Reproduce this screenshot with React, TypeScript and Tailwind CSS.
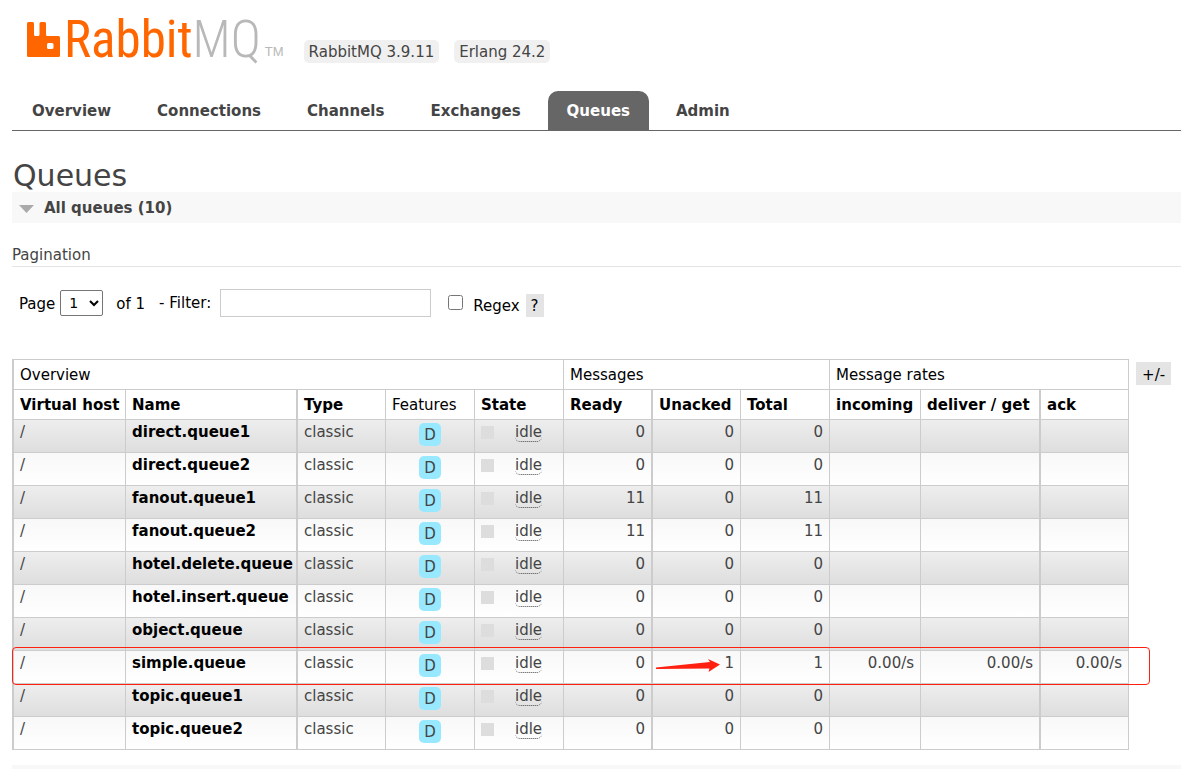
import React from "react";

const tabs = ["Overview", "Connections", "Channels", "Exchanges", "Queues", "Admin"];

type Queue = { name: string; ready: number; unacked: number; total: number; rate?: string };

const queues: Queue[] = [
  { name: "direct.queue1", ready: 0, unacked: 0, total: 0 },
  { name: "direct.queue2", ready: 0, unacked: 0, total: 0 },
  { name: "fanout.queue1", ready: 11, unacked: 0, total: 11 },
  { name: "fanout.queue2", ready: 11, unacked: 0, total: 11 },
  { name: "hotel.delete.queue", ready: 0, unacked: 0, total: 0 },
  { name: "hotel.insert.queue", ready: 0, unacked: 0, total: 0 },
  { name: "object.queue", ready: 0, unacked: 0, total: 0 },
  { name: "simple.queue", ready: 0, unacked: 1, total: 1, rate: "0.00/s" },
  { name: "topic.queue1", ready: 0, unacked: 0, total: 0 },
  { name: "topic.queue2", ready: 0, unacked: 0, total: 0 },
];

const thin = "border-r border-b border-[#ccc] px-[6px]";
const thick = "border-r-2 border-b border-[#ccc] px-[6px]";

function Logo() {
  return (
    <a href="#/" aria-label="RabbitMQ" className="flex items-end">
      <svg viewBox="0 0 33 35" className="mb-[5px] h-[35px] w-[33px]" fill="#f60" aria-hidden="true">
        <path
          fillRule="evenodd"
          d="M1.500 0H5.500Q7 0 7 1.500V12.500Q7 14 8.500 14H11Q12.500 14 12.500 12.500V1.500Q12.500 0 14 0H17.500Q19 0 19 1.500V12.500Q19 14 20.500 14H31.500Q33 14 33 15.500V33.500Q33 35 31.500 35H1.500Q0 35 0 33.500V1.500Q0 0 1.500 0ZM21.500 21Q20 21 20 22.500V25.500Q20 27 21.500 27H25Q26.500 27 26.500 25.500V22.500Q26.500 21 25 21Z"
        />
      </svg>
      <span className="ml-[4px] font-['Liberation_Sans_Narrow','Roboto_Condensed',Roboto,sans-serif] text-[51px] leading-[44px] font-normal text-[#f60]">
        Rabbit<span className="font-light text-[#b8b8b8]">MQ</span>
      </span>
      <span className="mb-[2px] ml-1 font-['Liberation_Sans',sans-serif] text-[13px] leading-4 text-[#b8b8b8]">TM</span>
    </a>
  );
}

export default function App() {
  return (
    <div className="bg-white pl-3 font-['DejaVu_Sans',Verdana,sans-serif] text-[15px] leading-[18px] text-[#444]">
      <header>
        <div className="flex h-[91px] items-start pt-[18px] pl-[15px]">
          <Logo />
          <ul className="mt-[22px] ml-5 flex gap-[15px]">
            <li className="rounded-[5px] bg-[#f0f0f0] px-[5px] pt-[3px] pb-px leading-[19px]">RabbitMQ 3.9.11</li>
            <li className="rounded-[5px] bg-[#f0f0f0] px-[5px] pt-[3px] pb-px leading-[19px]">Erlang 24.2</li>
          </ul>
        </div>
        <nav className="flex gap-2 border-b border-[#666] pl-px font-bold">
          {tabs.map((tab) => (
            <a
              key={tab}
              href={`#/${tab.toLowerCase()}`}
              className={
                tab === "Queues"
                  ? "rounded-t-[10px] bg-[#666] px-[19px] pt-[11px] pb-[10px] text-white"
                  : "px-[19px] pt-[11px] pb-[10px]"
              }
            >
              {tab}
            </a>
          ))}
        </nav>
      </header>

      <main>
        <h1 className="pt-7 pl-px text-[30px] leading-[33px]">Queues</h1>
        <h2 className="bg-[#f8f8f8] font-bold">
          <button type="button" className="flex w-full items-center pt-[7px] pb-[5px] pl-[7px] text-left leading-[19px]">
            <svg viewBox="0 0 15 8" className="mr-[10px] h-2 w-[15px]" fill="#aaa" aria-hidden="true">
              <path d="M0 0H15L7.500 8Z" />
            </svg>
            All queues (10)
          </button>
        </h2>
        <h3 className="border-b border-[#e4e4e4] pt-[23px] pb-[2px]">Pagination</h3>

        <form className="flex h-[92px] items-start pt-[22px] pl-[7px] text-black">
          <label htmlFor="page" className="mt-[6px]">Page</label>
          <select id="page" className="ml-[5px] mt-px h-[26px] w-[43px] rounded-[2px] border border-[#767676] bg-white pl-1 text-[14px]">
            <option>1</option>
          </select>
          <span className="mt-[6px] ml-[13px]">of 1</span>
          <label htmlFor="filter" className="mt-[5px] ml-[14px]">- Filter:</label>
          <input id="filter" type="text" className="ml-[9px] h-7 w-[211px] border border-[#ccc] px-1" />
          <input id="regex" type="checkbox" className="mt-[6px] ml-[17px] size-[15px]" />
          <label htmlFor="regex" className="mt-2 ml-[10px]">Regex</label>
          <button type="button" aria-label="Regex help" className="mt-[5px] ml-[6px] h-[23px] bg-[#e4e4e4] px-[5px]">?</button>
        </form>

        <div className="flex items-start">
          <div className="relative">
            <table className="w-[1117px] table-fixed border-separate border-spacing-0 border-t border-l-2 border-[#ccc] whitespace-nowrap">
              <colgroup>
                <col className="w-[112px]" />
                <col className="w-[172px]" />
                <col className="w-[88px]" />
                <col className="w-[89px]" />
                <col className="w-[89px]" />
                <col className="w-[89px]" />
                <col className="w-[88px]" />
                <col className="w-[89px]" />
                <col className="w-[91px]" />
                <col className="w-[120px]" />
                <col className="w-[88px]" />
              </colgroup>
              <thead className="text-left text-black">
                <tr className="h-[30px]">
                  <th colSpan={5} className={`${thin} font-normal`}>Overview</th>
                  <th colSpan={3} className={`${thin} font-normal`}>Messages</th>
                  <th colSpan={3} className={`${thin} font-normal`}>Message rates</th>
                </tr>
                <tr className="h-[30px]">
                  <th className={thin}>Virtual host</th>
                  <th className={thick}>Name</th>
                  <th className={thin}>Type</th>
                  <th className={`${thin} font-normal`}>Features</th>
                  <th className={thin}>State</th>
                  <th className={thick}>Ready</th>
                  <th className={thin}>Unacked</th>
                  <th className={thin}>Total</th>
                  <th className={thin}>incoming</th>
                  <th className={thick}>deliver / get</th>
                  <th className={thin}>ack</th>
                </tr>
              </thead>
              <tbody className="[&_td]:pt-[3px] [&_td]:align-top">
                {queues.map((q, i) => (
                  <tr
                    key={q.name}
                    className={
                      i % 2 === 0
                        ? "h-[33px] bg-linear-to-b from-[#eee] to-[#ddd]"
                        : "h-[33px] bg-linear-to-b from-[#f8f8f8] to-white"
                    }
                  >
                    <td className={thin}>/</td>
                    <td className={thick}>
                      <a href={`#/queues/${q.name}`} className="font-bold text-black">{q.name}</a>
                    </td>
                    <td className={thin}>classic</td>
                    <td className={`${thin} text-center`}>
                      <abbr title="durable: true" className="inline-block rounded-[5px] bg-[#98e9ff] px-[5px] pt-[3px] pb-[2px] no-underline">
                        D
                      </abbr>
                    </td>
                    <td className={thin}>
                      <div className="flex items-start">
                        <span className="mt-[3px] mr-[21px] size-[13px] bg-[#ddd]" />
                        <abbr title="idle" className="rounded-[5px] border-b border-dotted border-[#444] no-underline">
                          idle
                        </abbr>
                      </div>
                    </td>
                    <td className={`${thick} text-right`}>{q.ready}</td>
                    <td className={`${thin} text-right`}>{q.unacked}</td>
                    <td className={`${thin} text-right`}>{q.total}</td>
                    <td className={`${thin} text-right`}>{q.rate}</td>
                    <td className={`${thick} text-right`}>{q.rate}</td>
                    <td className={`${thin} text-right`}>{q.rate}</td>
                  </tr>
                ))}
              </tbody>
            </table>
            <div className="pointer-events-none absolute -right-[21px] bottom-[65px] left-0 h-[38px] rounded-[4px] border border-[#ff2010]" />
            <svg viewBox="0 0 64 13" className="pointer-events-none absolute bottom-[78px] left-[644px] h-[13px] w-16" fill="#ff2010" aria-hidden="true">
              <path d="M0 8.500L54 3L52 0L64 5.500L52.500 13L53.500 9.500L0 10Z" />
            </svg>
          </div>
          <button type="button" className="mt-[3px] ml-[7px] h-[23px] bg-[#e4e4e4] px-[6px] pt-[2px] text-black">+/-</button>
        </div>
        <div className="mt-[15px] h-1 bg-[#f8f8f8]" />
      </main>
    </div>
  );
}
